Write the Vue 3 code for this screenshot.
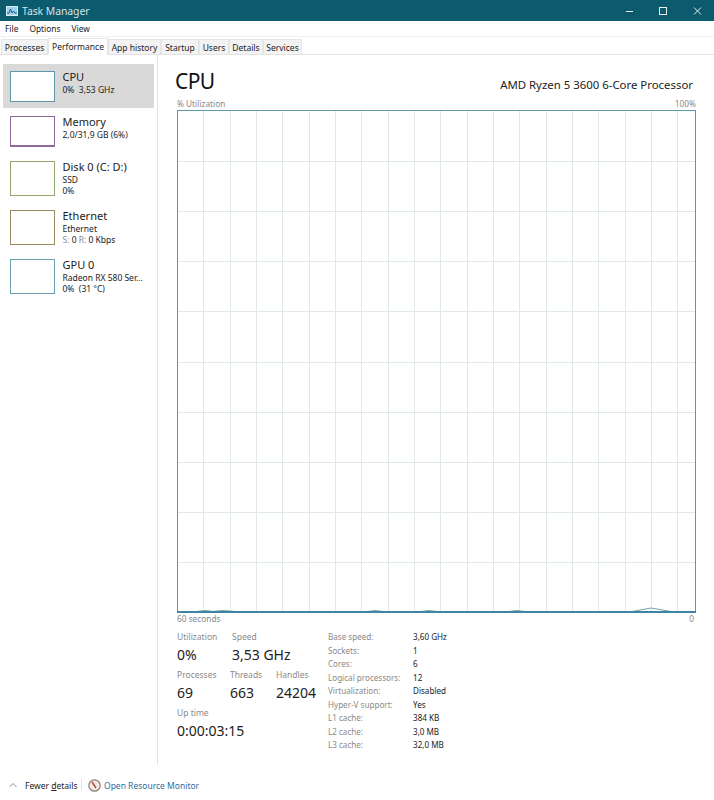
<template>
  <div class="window">
    <header class="titlebar">
      <svg class="app-icon" width="12" height="10" viewBox="0 0 12 10">
        <rect x="0.5" y="0.5" width="11" height="9" fill="#9fd0ea" stroke="#d7ecf7" />
        <polyline points="1,7 3,7 4.5,3 6,7 7.5,5 9,7 11,7" fill="none" stroke="#1d5f8a" stroke-width="1" />
      </svg>
      <span class="title">Task Manager</span>
      <div class="controls">
        <svg width="9" height="12" viewBox="0 0 9 12"><line x1="1" y1="6.5" x2="8" y2="6.5" stroke="#e8f1f3" /></svg>
        <svg width="9" height="12" viewBox="0 0 9 12"><rect x="0.5" y="2.5" width="7" height="7" fill="none" stroke="#e8f1f3" /></svg>
        <svg width="9" height="12" viewBox="0 0 9 12"><path d="M1 2.5l7 7M8 2.5l-7 7" stroke="#e8f1f3" fill="none" /></svg>
      </div>
    </header>

    <nav class="menu">
      <span v-for="m in menus" :key="m">{{ m }}</span>
    </nav>

    <div class="tabs">
      <span
        v-for="t in tabs"
        :key="t.name"
        class="tab"
        :class="{ active: t.name === 'Performance' }"
        :style="{ width: t.width + 'px' }"
      >{{ t.name }}</span>
    </div>

    <div class="body">
      <aside class="sidebar">
        <div
          v-for="item in devices"
          :key="item.name"
          class="device"
          :class="{ selected: item.selected, short: item.lines.length === 1 }"
        >
          <div class="thumb" :class="{ memory: item.memory }" :style="{ borderColor: item.color }"></div>
          <div class="device-text">
            <div class="device-name">{{ item.name }}</div>
            <div v-for="l in item.lines" :key="l" class="device-line" v-html="l"></div>
          </div>
        </div>
      </aside>

      <main class="main">
        <div class="heading">
          <h1>CPU</h1>
          <span class="model">AMD Ryzen 5 3600 6-Core Processor</span>
        </div>
        <div class="axis top"><span>% Utilization</span><span>100%</span></div>

        <svg class="graph" width="519" height="503" viewBox="0 0 519 503">
          <line v-for="x in vLines" :key="'v' + x" :x1="x" y1="0" :x2="x" y2="503" class="grid" />
          <line v-for="y in hLines" :key="'h' + y" x1="0" :y1="y" x2="519" :y2="y" class="grid" />
          <polygon points="20,501 28,500 36,501 46,500 58,501" fill="#cfe3ea" />
          <polyline
            points="1,501.5 20,501.5 28,500.5 36,501.5 46,500.5 58,501.5 190,501.5 198,500.5 206,501.5 244,501.5 252,500.5 260,501.5 332,501.5 340,500.5 348,501.5 455,501.5 474,498 494,501.5 518,501.5"
            fill="none"
            stroke="#6fa3b8"
          />
          <rect x="0.5" y="0.5" width="518" height="501.5" fill="none" stroke="#5f97ab" />
          <line x1="0" y1="502" x2="519" y2="502" stroke="#3f84a0" stroke-width="2" />
        </svg>

        <div class="axis bottom"><span>60 seconds</span><span>0</span></div>

        <div class="stats">
          <div class="live">
            <div class="stat-row first">
              <div class="stat w55"><label>Utilization</label><b>0%</b></div>
              <div class="stat"><label>Speed</label><b>3,53 GHz</b></div>
            </div>
            <div class="stat-row">
              <div class="stat w53"><label>Processes</label><b>69</b></div>
              <div class="stat w46"><label>Threads</label><b>663</b></div>
              <div class="stat"><label>Handles</label><b>24204</b></div>
            </div>
            <div class="stat-row">
              <div class="stat"><label>Up time</label><b>0:00:03:15</b></div>
            </div>
          </div>
          <dl class="specs">
            <template v-for="s in specs" :key="s[0]">
              <dt>{{ s[0] }}</dt>
              <dd>{{ s[1] }}</dd>
            </template>
          </dl>
        </div>
      </main>
    </div>

    <footer class="footer">
      <svg width="8" height="6" viewBox="0 0 8 6" class="chevron"><path d="M0.5 5L4 1.5 7.5 5" fill="none" stroke="#8a8a8a" /></svg>
      <span class="fewer">Fewer <u>d</u>etails</span>
      <span class="sep"></span>
      <svg width="13" height="13" viewBox="0 0 13 13" class="monitor">
        <circle cx="6.5" cy="6.5" r="5.7" fill="#f1ece6" stroke="#8d7f78" stroke-width="1.2" />
        <path d="M4 3l4 6" stroke="#b8413f" stroke-width="1.4" />
      </svg>
      <span class="link">Open Resource Monitor</span>
    </footer>
  </div>
</template>

<script setup>
const menus = ["File", "Options", "View"];

const tabs = [
  { name: "Processes", width: 47 },
  { name: "Performance", width: 60 },
  { name: "App history", width: 53 },
  { name: "Startup", width: 38 },
  { name: "Users", width: 30 },
  { name: "Details", width: 34 },
  { name: "Services", width: 39 },
];

const devices = [
  { name: "CPU", lines: ["0%&nbsp; 3,53 GHz"], color: "#5f97a8", selected: true },
  { name: "Memory", lines: ["2,0/31,9 GB (6%)"], color: "#8e6a9c", memory: true },
  { name: "Disk 0 (C: D:)", lines: ["SSD", "0%"], color: "#93a86e" },
  { name: "Ethernet", lines: ["Ethernet", '<span style="color:#8c8c8c">S:</span> 0 <span style="color:#8c8c8c">R:</span> 0 Kbps'], color: "#9c8a62" },
  { name: "GPU 0", lines: ["Radeon RX 580 Ser...", "0%&nbsp; (31 °C)"], color: "#6a9fae" },
];

const vLines = Array.from({ length: 19 }, (_, i) => Math.round(26.3 + i * 26.33) + 0.5);
const hLines = Array.from({ length: 9 }, (_, i) => Math.round(51 + i * 50.15) + 0.5);

const specs = [
  ["Base speed:", "3,60 GHz"],
  ["Sockets:", "1"],
  ["Cores:", "6"],
  ["Logical processors:", "12"],
  ["Virtualization:", "Disabled"],
  ["Hyper-V support:", "Yes"],
  ["L1 cache:", "384 KB"],
  ["L2 cache:", "3,0 MB"],
  ["L3 cache:", "32,0 MB"],
];
</script>

<style>
html,
body {
  margin: 0;
  background: #fff;
}
</style>

<style scoped>
.window {
  width: 714px;
  height: 800px;
  display: flex;
  flex-direction: column;
  overflow: hidden;
  background: #fff;
  color: #222;
  font-family: "Noto Sans", "Open Sans", sans-serif;
  font-size: 8.5px;
}

.titlebar {
  height: 21px;
  flex: none;
  display: flex;
  align-items: center;
  padding-left: 6px;
  background: #0b5a6e;
  color: #d5e3e7;
}

.app-icon {
  margin-right: 4px;
}

.title {
  font-size: 10.4px;
  letter-spacing: -0.05px;
}

.controls {
  margin-left: auto;
  display: flex;
  gap: 25px;
  padding-right: 12px;
}

.menu {
  height: 15px;
  flex: none;
  display: flex;
  align-items: center;
  gap: 11px;
  padding-left: 5px;
  font-size: 8.4px;
}

.tabs {
  height: 17px;
  flex: none;
  display: flex;
  align-items: flex-end;
  padding-left: 1px;
  border-top: 1px solid #f0f0f0;
  border-bottom: 1px solid #e2e2e2;
}

.tab {
  height: 15px;
  box-sizing: border-box;
  display: flex;
  align-items: center;
  justify-content: center;
  background: #f3f3f3;
  border: 1px solid #e6e6e6;
  border-bottom: none;
  font-size: 8.5px;
  white-space: nowrap;
}

.tab.active {
  height: 17px;
  background: #fff;
  padding-bottom: 2px;
  position: relative;
  top: 1px;
}

.body {
  flex: 1;
  display: flex;
  min-height: 0;
}

.sidebar {
  width: 158px;
  flex: none;
  box-sizing: border-box;
  height: 710px;
  padding: 9px 3px 0;
  border-right: 1px solid #e2e2e2;
}

.device {
  width: 151px;
  height: 49px;
  box-sizing: border-box;
  display: flex;
  padding: 7px 0 0 7px;
  gap: 7.5px;
}

.device.short {
  height: 45px;
}

.device.selected {
  height: 44px;
  margin-bottom: 1px;
  background: #d9d9d9;
}

.thumb {
  width: 45px;
  height: 35px;
  box-sizing: border-box;
  flex: none;
  background: #fff;
  border: 1px solid;
}

.device.short .thumb {
  height: 31px;
}

.thumb.memory {
  border-bottom-width: 2px;
}

.device-text {
  margin-top: -2.5px;
}

.device-name {
  font-size: 11px;
  line-height: 15px;
}

.device-line {
  font-size: 8.5px;
  line-height: 11.5px;
  white-space: nowrap;
}

.main {
  flex: 1;
  min-width: 0;
  padding: 14px 0 0 19px;
}

.heading {
  width: 516px;
  height: 24px;
  margin-bottom: 5px;
  display: flex;
  align-items: center;
  justify-content: space-between;
}

h1 {
  margin: 0 0 0 -2px;
  font-size: 21px;
  letter-spacing: -0.6px;
  font-weight: 400;
  color: #111;
}

.model {
  font-size: 11.4px;
  position: relative;
  top: 3px;
}

.axis {
  width: 519px;
  display: flex;
  justify-content: space-between;
  color: #8a8a8a;
  font-size: 8.3px;
  line-height: 12px;
}

.axis.top {
  height: 12px;
}

.axis.bottom {
  height: 14px;
}

.axis.bottom span:last-child {
  padding-right: 2px;
}

.graph {
  display: block;
}

.grid {
  stroke: #dfe9ec;
  stroke-width: 1;
}

.stats {
  display: flex;
  margin-top: 3px;
}

.live {
  width: 151px;
  flex: none;
}

.stat-row {
  display: flex;
  height: 38px;
}

.stat {
  display: flex;
  flex-direction: column;
}

.w55 {
  width: 55px;
}

.w53 {
  width: 53px;
}

.w46 {
  width: 46px;
}

.stat label {
  font-size: 8.5px;
  line-height: 14px;
  color: #8a8a8a;
}

.stat b {
  font-size: 14px;
  font-weight: 400;
  line-height: 22px;
  color: #222;
  white-space: nowrap;
}

.specs {
  margin: 0;
  display: grid;
  grid-template-columns: 85px auto;
  grid-auto-rows: 13.5px;
  line-height: 13.5px;
  font-size: 8.1px;
}

.specs dt {
  color: #8a8a8a;
}

.specs dd {
  margin: 0;
}

.footer {
  height: 30px;
  flex: none;
  display: flex;
  align-items: center;
  padding-left: 9px;
  font-size: 8.5px;
}

.chevron {
  margin-right: 8px;
}

.fewer {
  width: 56px;
  white-space: nowrap;
}

.sep {
  width: 1px;
  height: 12px;
  background: #e2e2e2;
  margin-right: 6px;
}

.monitor {
  margin-right: 3px;
}

.link {
  color: #2d6da3;
}
</style>
